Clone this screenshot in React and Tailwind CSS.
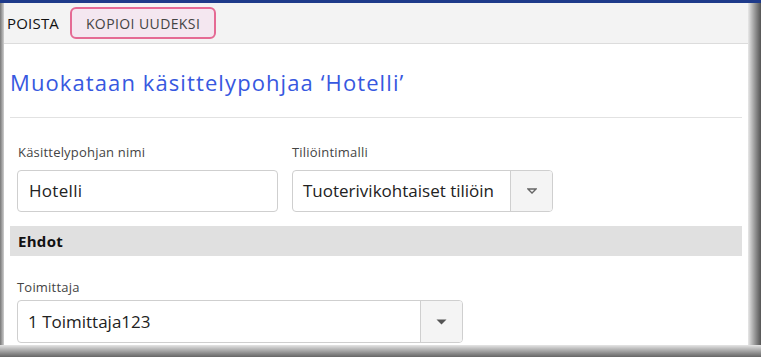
export default function App() {
  const font = { fontFamily: '"Open Sans", "Noto Sans", sans-serif' };
  return (
    <div className="w-[761px] h-[357px] overflow-hidden bg-[#6b6b6b] flex flex-col" style={font}>
      <div className="h-[3px] bg-[#1e3a8a] shrink-0" />
      <div className="flex flex-1 min-h-0">
        <div className="w-[4px] bg-gradient-to-r from-[#777] to-[#d0d0d0] shrink-0" />
        <div className="flex-1 flex flex-col bg-white min-w-0">
          <div className="h-[41px] bg-[#f3f3f3] border-b border-[#dcdcdc] flex items-center shrink-0">
            <span className="ml-[3px] text-[15px] tracking-[0.2px] text-[#111]">POISTA</span>
            <button className="ml-[11px] h-[32px] w-[146px] rounded-[6px] border-2 border-[#e56a94] bg-[#f4e7f0] text-[14px] tracking-[0.4px] text-[#444]">
              KOPIOI UUDEKSI
            </button>
          </div>
          <div className="px-[6px]">
            <h1 className="text-[22px] tracking-[1.1px] text-[#3758e0] h-[74px] pt-[4px] flex items-center border-b border-[#e2e2e2]">
              Muokataan käsittelypohjaa ‘Hotelli’
            </h1>
            <div className="flex gap-[14px] pl-[7px] pt-[25px]">
              <div className="w-[261px]">
                <div className="text-[13px] tracking-[0.2px] text-[#444] ml-[1px] mb-[9px] leading-[18px]">Käsittelypohjan nimi</div>
                <div className="h-[42px] border border-[#cfcfcf] rounded-[4px] flex items-center px-[11px] text-[17px] tracking-[0.3px] text-[#222]">
                  Hotelli
                </div>
              </div>
              <div className="w-[261px]">
                <div className="text-[13px] tracking-[0.2px] text-[#444] mb-[9px] leading-[18px]">Tiliöintimalli</div>
                <div className="h-[42px] border border-[#cfcfcf] rounded-[4px] flex text-[17px] text-[#222] overflow-hidden">
                  <div className="flex-1 flex items-center pl-[10px] overflow-hidden whitespace-nowrap">
                    Tuoterivikohtaiset tiliöin
                  </div>
                  <div className="w-[42px] border-l border-[#cfcfcf] bg-[#f4f4f4] flex items-center justify-center shrink-0">
                    <svg width="10" height="6" viewBox="0 0 10 6">
                      <path d="M1 1 L9 1 L5 5 Z" fill="none" stroke="#666" strokeWidth="1.3" />
                    </svg>
                  </div>
                </div>
              </div>
            </div>
            <div className="mt-[14px] h-[30px] bg-[#e0e0e0] flex items-center pl-[8px] text-[15px] font-bold tracking-[0.3px] text-[#111]">
              Ehdot
            </div>
            <div className="pl-[7px] pt-[22px]">
              <div className="text-[13px] tracking-[0.2px] text-[#444] mb-[4px] leading-[18px]">Toimittaja</div>
              <div className="w-[446px] h-[43px] border border-[#cfcfcf] rounded-[4px] flex text-[17px] text-[#222] overflow-hidden">
                <div className="flex-1 flex items-center pl-[10px]">1 Toimittaja123</div>
                <div className="w-[42px] border-l border-[#cfcfcf] bg-[#f4f4f4] flex items-center justify-center shrink-0">
                  <svg width="11" height="6" viewBox="0 0 11 6">
                    <path d="M0.5 0.5 L10.5 0.5 L5.5 5.5 Z" fill="#555" />
                  </svg>
                </div>
              </div>
            </div>
          </div>
        </div>
        <div className="w-[13px] bg-gradient-to-r from-[#e8e8e8] to-[#555] shrink-0" />
      </div>
      <div className="h-[12px] bg-gradient-to-b from-[#e6e6e6] to-[#666] shrink-0" />
    </div>
  );
}
